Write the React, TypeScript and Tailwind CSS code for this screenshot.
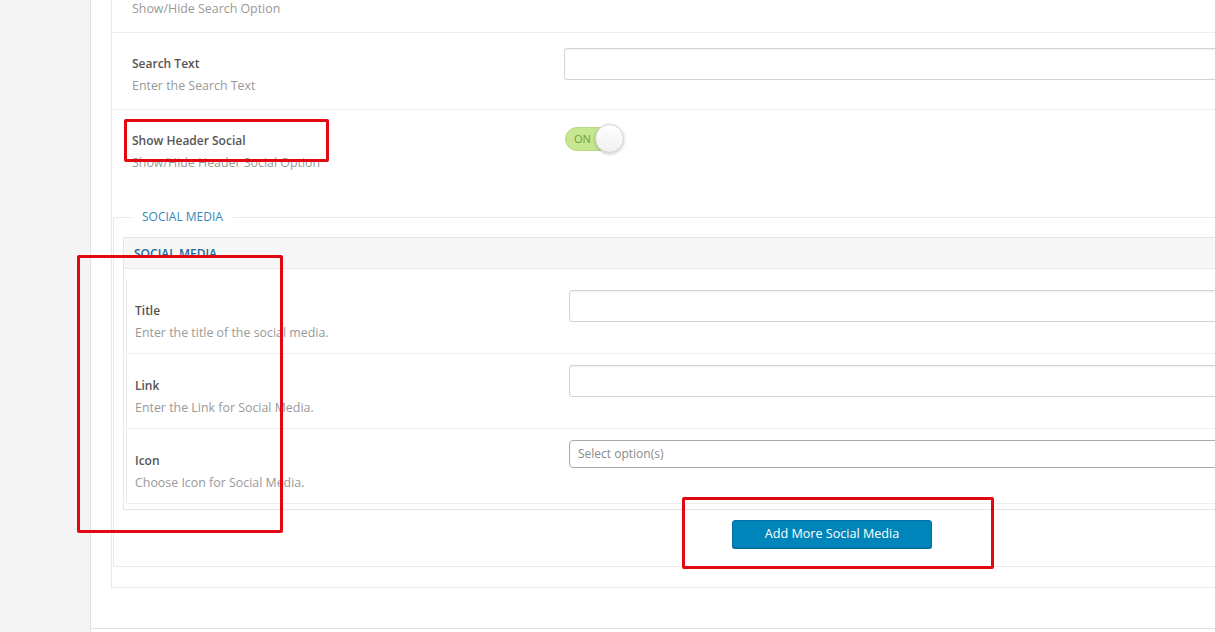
import type { ReactNode } from "react";

const font = { fontFamily: '"Open Sans", "Liberation Sans", sans-serif' };

function OuterRow({
  label,
  desc,
  border = true,
  children,
}: {
  label: string;
  desc: string;
  border?: boolean;
  children?: ReactNode;
}) {
  return (
    <div className={`flex h-[77px] ${border ? "border-b border-[#eeeeee]" : ""}`}>
      <div className="w-[452px] shrink-0 pl-[20px] pt-[22px]">
        <div className="text-[12px] leading-[18px] font-semibold text-[#555]">{label}</div>
        <div className="mt-[4px] text-[12.4px] leading-[18px] text-[#999]">{desc}</div>
      </div>
      <div className="flex-1 pt-[15px]">{children}</div>
    </div>
  );
}

function InnerRow({
  label,
  desc,
  children,
}: {
  label: string;
  desc: string;
  children?: ReactNode;
}) {
  return (
    <div className="flex h-[75px] border-b border-[#eeeeee]">
      <div className="w-[442px] shrink-0 pl-[8px] pt-[23px]">
        <div className="text-[12px] leading-[18px] font-semibold text-[#555]">{label}</div>
        <div className="mt-[4px] text-[12.4px] leading-[18px] text-[#999]">{desc}</div>
      </div>
      <div className="flex-1 pt-[11px]">{children}</div>
    </div>
  );
}

function TextInput() {
  return (
    <div className="h-[32px] w-full rounded-[3px] border border-[#d4d4d4] bg-white shadow-[inset_0_1px_2px_rgba(0,0,0,0.07)]" />
  );
}

function Toggle() {
  return (
    <div className="relative ml-px mt-[2px] h-[24px] w-[59px]">
      <div className="absolute inset-y-0 left-0 w-[45px] rounded-full border border-[#b7d97e] bg-[#c6e690] pl-[8px] text-[11px] leading-[22px] text-[#6f9a3f]">
        ON
      </div>
      <div className="absolute right-0 top-[-3px] h-[29px] w-[29px] rounded-full border border-[#cfcfcf] bg-gradient-to-b from-white to-[#f0f0f0] shadow-[0_1px_3px_rgba(0,0,0,0.25)]" />
    </div>
  );
}

function Marker({ className }: { className: string }) {
  return <div className={`pointer-events-none absolute rounded-[2px] border-[3px] border-[#e30613] ${className}`} />;
}

export default function App() {
  return (
    <div className="relative flex h-[632px] w-[1215px] overflow-hidden bg-white" style={font}>
      <div className="w-[91px] shrink-0 border-r border-[#e2e2e2] bg-[#f4f4f4]" />

      <div className="w-[1400px] shrink-0">
        <div className="flex h-[629px] flex-col border-b border-[#e2e2e2] pl-[20px]">
          <div className="-mt-[44px] border-b border-l border-[#e8e8e8] pb-[20px]">
            <OuterRow label="Show Search" desc="Show/Hide Search Option" />
            <OuterRow label="Search Text" desc="Enter the Search Text">
              <TextInput />
            </OuterRow>
            <OuterRow label="Show Header Social" desc="Show/Hide Header Social Option" border={false}>
              <Toggle />
            </OuterRow>

            <fieldset className="ml-px mt-[21px] border-t border-b border-l border-[#eaeaea] pb-[18px] pl-[9px]">
              <legend className="ml-[9px] px-[10px] text-[12px] leading-[18px] text-[#3886b8]">SOCIAL MEDIA</legend>
              <div className="mt-[11px] border-b border-l border-t border-[#e5e5e5]">
                <div className="h-[31px] border-b border-[#e8e8e8] bg-[#f7f7f7] pl-[10px] pt-[7px] text-[12px] leading-[18px] font-semibold text-[#24699c]">
                  SOCIAL MEDIA
                </div>
                <div className="mb-[5px] ml-[2px] mt-[10px] border-l border-[#ececec]">
                  <InnerRow label="Title" desc="Enter the title of the social media.">
                    <TextInput />
                  </InnerRow>
                  <InnerRow label="Link" desc="Enter the Link for Social Media.">
                    <TextInput />
                  </InnerRow>
                  <InnerRow label="Icon" desc="Choose Icon for Social Media.">
                    <div className="h-[28px] w-full rounded-[4px] border border-[#aaaaaa] bg-white pl-[8px] text-[12px] leading-[26px] text-[#8a8a8a]">
                      Select option(s)
                    </div>
                  </InnerRow>
                </div>
              </div>

              <div className="flex pl-[609px] pt-[10px]">
                <button className="h-[28px] w-[200px] rounded-[3px] border border-[#0073aa] bg-[#0085ba] text-[12.6px] text-white shadow-[0_1px_0_#006799]">
                  Add More Social Media
                </button>
              </div>
            </fieldset>
          </div>
        </div>
      </div>

      <Marker className="left-[124px] top-[119px] h-[43px] w-[205px]" />
      <Marker className="left-[77px] top-[255px] h-[278px] w-[206px]" />
      <Marker className="left-[682px] top-[497px] h-[72px] w-[312px]" />
    </div>
  );
}
